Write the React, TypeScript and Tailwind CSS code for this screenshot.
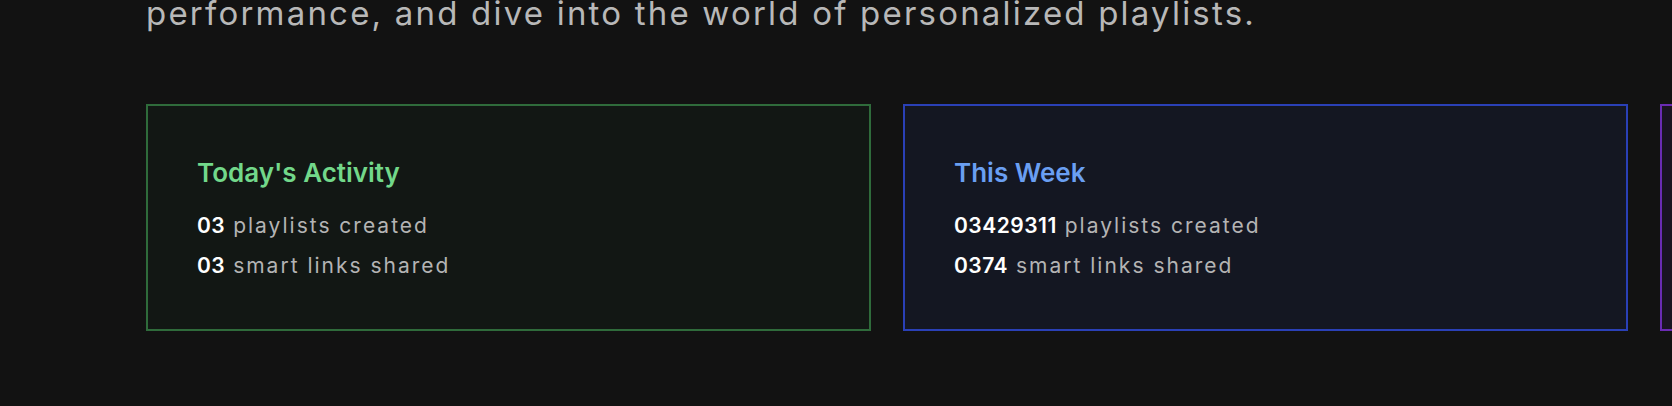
import React from 'react';

type Stat = {
  title: string;
  playlists: string;
  links: string;
  border: string;
  bg: string;
  titleColor: string;
};

const stats: Stat[] = [
  {
    title: "Today's Activity",
    playlists: '03',
    links: '03',
    border: 'border-[#2f6b3b]',
    bg: 'bg-[#121714]',
    titleColor: 'text-[#72d88a]',
  },
  {
    title: 'This Week',
    playlists: '03429311',
    links: '0374',
    border: 'border-[#2a40b6]',
    bg: 'bg-[#141722]',
    titleColor: 'text-[#6a9ff2]',
  },
  {
    title: 'This Month',
    playlists: '12840',
    links: '1203',
    border: 'border-[#6a2bb2]',
    bg: 'bg-[#1a1421]',
    titleColor: 'text-[#b37df0]',
  },
];

const StatCard = ({ stat }: { stat: Stat }) => {
  return (
    <div className={`shrink-0 w-[725px] border-2 ${stat.border} ${stat.bg} pl-[49px] pt-[49px] pb-[43px]`}>
      <h3 className={`text-[26px] leading-[36px] font-semibold ${stat.titleColor}`}>
        {stat.title}
      </h3>
      <div className="mt-[15px] text-[21px] leading-[40px] text-[#b4b4b4] tracking-[2px]">
        <p>
          <span className="font-semibold text-white tracking-[0.5px]">{stat.playlists}</span> playlists created
        </p>
        <p>
          <span className="font-semibold text-white tracking-[0.5px]">{stat.links}</span> smart links shared
        </p>
      </div>
    </div>
  );
};

export default function App() {
  return (
    <div
      className="w-full h-[406px] overflow-hidden bg-[#121212]"
      style={{ fontFamily: 'Inter, "Noto Sans", sans-serif' }}
    >
      <div className="pl-[146px]">
        <p className="-mt-[7px] text-[33px] leading-[40px] text-[#b8b8b8] tracking-[2.2px] whitespace-nowrap">
          performance, and dive into the world of personalized playlists.
        </p>

        {/* Stat cards */}
        <div className="mt-[71px] flex gap-[32px]">
          {stats.map((s) => (
            <StatCard key={s.title} stat={s} />
          ))}
        </div>
      </div>
    </div>
  );
}
